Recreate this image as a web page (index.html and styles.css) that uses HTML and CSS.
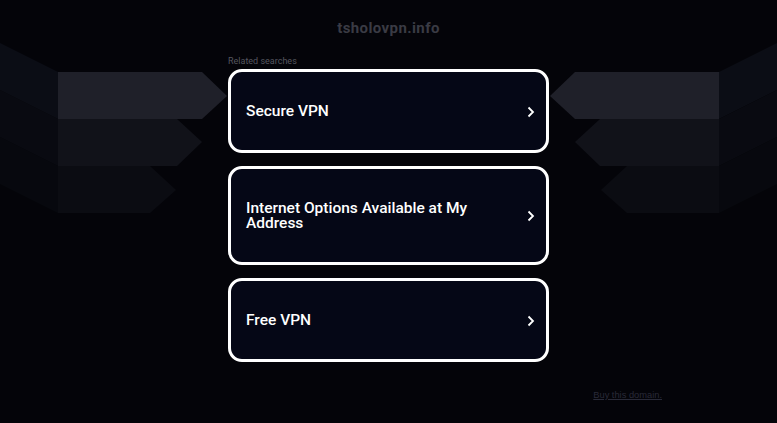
FILE: index.html
```html
<!DOCTYPE html>
<html lang="en">
<head>
  <meta charset="UTF-8">
  <title>tsholovpn.info</title>
  <link rel="stylesheet" href="styles.css">
</head>
<body>
  <svg class="backdrop" width="777" height="423" viewBox="0 0 777 423" aria-hidden="true">
    <!-- left wing -->
    <polygon points="0,43 58,72 58,119 0,90" fill="#0b0d15"/>
    <polygon points="0,90 58,119 58,166 0,137" fill="#090a11"/>
    <polygon points="0,137 58,166 58,213 0,184" fill="#07080e"/>
    <polygon points="58,72 202,72 227,96 202,119 58,119" fill="#1f2029"/>
    <polygon points="58,119 177,119 202,142 177,166 58,166" fill="#111219"/>
    <polygon points="58,166 150,166 176,190 150,213 58,213" fill="#0b0c12"/>
    <!-- right wing -->
    <polygon points="777,43 719,72 719,119 777,90" fill="#0b0d15"/>
    <polygon points="777,90 719,119 719,166 777,137" fill="#090a11"/>
    <polygon points="777,137 719,166 719,213 777,184" fill="#07080e"/>
    <polygon points="719,72 575,72 550,96 575,119 719,119" fill="#1f2029"/>
    <polygon points="719,119 600,119 575,142 600,166 719,166" fill="#111219"/>
    <polygon points="719,166 627,166 601,190 627,213 719,213" fill="#0b0c12"/>
  </svg>

  <div class="page">
    <h1 class="domain">tsholovpn.info</h1>

    <div class="searches">
      <p class="label">Related searches</p>
      <a class="result" href="#">
        <span>Secure VPN</span>
        <svg class="chevron" width="8" height="12" viewBox="0 0 8 12"><path d="M1.5 1.5 6 6 1.5 10.5" fill="none" stroke="#fff" stroke-width="1.8"/></svg>
      </a>
      <a class="result" href="#">
        <span>Internet Options Available at My Address</span>
        <svg class="chevron" width="8" height="12" viewBox="0 0 8 12"><path d="M1.5 1.5 6 6 1.5 10.5" fill="none" stroke="#fff" stroke-width="1.8"/></svg>
      </a>
      <a class="result" href="#">
        <span>Free VPN</span>
        <svg class="chevron" width="8" height="12" viewBox="0 0 8 12"><path d="M1.5 1.5 6 6 1.5 10.5" fill="none" stroke="#fff" stroke-width="1.8"/></svg>
      </a>
    </div>

    <div class="footer">
      <a href="#">Buy this domain.</a>
    </div>
  </div>
</body>
</html>
```

FILE: styles.css
```css
body {
  margin: 0;
  background: #040409;
  font-family: Roboto, "Liberation Sans", sans-serif;
  color: #fff;
  overflow: hidden;
}

.backdrop {
  position: absolute;
  top: 0;
  left: 0;
  z-index: 0;
}

.page {
  position: relative;
  z-index: 1;
  height: 423px;
}

.domain {
  margin: 0;
  padding-top: 19px;
  text-align: center;
  font-size: 15px;
  line-height: 18px;
  font-weight: 700;
  letter-spacing: 0.4px;
  color: #3a3b44;
}

.searches {
  width: 321px;
  margin: 19px auto 0;
}

.label {
  margin: 0 0 3px;
  font-size: 9px;
  line-height: 10px;
  color: #55565f;
}

.result {
  display: flex;
  align-items: center;
  justify-content: space-between;
  gap: 20px;
  padding: 32px 11px 31px 15px;
  margin-bottom: 13px;
  border: 3px solid #fff;
  border-radius: 14px;
  background: #050716;
  color: #fff;
  text-decoration: none;
  font-size: 15.5px;
  line-height: 15px;
  font-weight: 500;
}

.result span {
  max-width: 240px;
}

.chevron {
  flex: none;
}

.footer {
  display: flex;
  justify-content: flex-end;
  padding: 15px 115px 0 0;
}

.footer a {
  font-family: "Liberation Sans", Arial, sans-serif;
  font-size: 9.3px;
  color: #292a38;
}
```
